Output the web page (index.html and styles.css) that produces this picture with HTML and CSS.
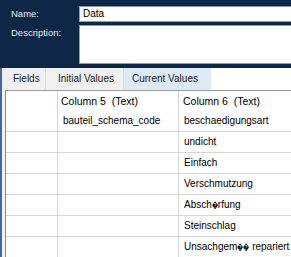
FILE: index.html
```html
<!DOCTYPE html>
<html>
<head>
<meta charset="utf-8">
<link rel="stylesheet" href="styles.css">
</head>
<body>
<div class="top">
  <div class="field">
    <label class="lbl">Name:</label>
    <div class="input name-input">Data</div>
  </div>
  <div class="field">
    <label class="lbl">Description:</label>
    <div class="input desc-input"></div>
  </div>
</div>
<div class="bottom">
  <div class="tabs">
    <div class="tab tab-fields">Fields</div>
    <div class="tab tab-initial">Initial Values</div>
    <div class="tab tab-current">Current Values</div>
    <div class="tab-rest"></div>
  </div>
  <div class="grid">
    <div class="row head">
      <div class="cell c0"></div>
      <div class="cell c1">Column 5&nbsp; (Text)</div>
      <div class="cell c2">Column 6&nbsp; (Text)</div>
    </div>
    <div class="row">
      <div class="cell c0"></div>
      <div class="cell c1">bauteil_schema_code</div>
      <div class="cell c2">beschaedigungsart</div>
    </div>
    <div class="row">
      <div class="cell c0"></div>
      <div class="cell c1"></div>
      <div class="cell c2">undicht</div>
    </div>
    <div class="row">
      <div class="cell c0"></div>
      <div class="cell c1"></div>
      <div class="cell c2">Einfach</div>
    </div>
    <div class="row">
      <div class="cell c0"></div>
      <div class="cell c1"></div>
      <div class="cell c2">Verschmutzung</div>
    </div>
    <div class="row">
      <div class="cell c0"></div>
      <div class="cell c1"></div>
      <div class="cell c2">Absch<span class="repl">&#xFFFD;</span>rfung</div>
    </div>
    <div class="row">
      <div class="cell c0"></div>
      <div class="cell c1"></div>
      <div class="cell c2">Steinschlag</div>
    </div>
    <div class="row">
      <div class="cell c0"></div>
      <div class="cell c1"></div>
      <div class="cell c2">Unsachgem<span class="repl">&#xFFFD;</span><span class="repl">&#xFFFD;</span> repariert</div>
    </div>
  </div>
</div>
</body>
</html>
```

FILE: styles.css
```css
html, body {
  margin: 0;
  padding: 0;
  width: 291px;
  height: 257px;
  overflow: hidden;
  background: #ffffff;
  font-family: "Liberation Sans", Arial, sans-serif;
}

.top {
  background: #0e2747;
  height: 68px;
  box-sizing: border-box;
  padding-top: 6px;
  display: flex;
  flex-direction: column;
  gap: 3px;
}

.field {
  display: flex;
  align-items: flex-start;
}

.lbl {
  width: 68px;
  padding-left: 11px;
  color: #e6ecf3;
  font-size: 9.5px;
  line-height: 15px;
}

.input {
  flex: 1;
  background: #ffffff;
  border: 1px solid #8e98a6;
  border-right: none;
  box-sizing: border-box;
  font-size: 10px;
  color: #000;
  padding-left: 3px;
}

.name-input {
  height: 16px;
  line-height: 14px;
}

.desc-input {
  height: 39px;
}

.bottom {
  border-left: 2px solid #46699a;
  background: #f0f0f0;
  height: 189px;
}

.tabs {
  display: flex;
  height: 22px;
}

.tab {
  font-size: 10px;
  line-height: 22px;
  color: #1a1a1a;
  box-sizing: border-box;
  border-right: 1px solid #dadada;
}

.tab-fields {
  width: 44px;
  padding-left: 11px;
}

.tab-initial {
  width: 78px;
  padding-left: 12px;
}

.tab-current {
  width: 87px;
  padding-left: 8px;
  background: #dce9f6;
  border-right: none;
}

.tab-rest {
  flex: 1;
  background: #ffffff;
}

.grid {
  margin-left: 3px;
  background: #ffffff;
  border-top: 1px solid #9a9a9a;
  border-left: 1px solid #8a8a8a;
  height: 200px;
}

.row {
  display: flex;
  height: 21px;
  box-sizing: border-box;
  border-bottom: 1px solid #d6d6d6;
}

.row.head {
  height: 20px;
  border-bottom: none;
}

.cell {
  box-sizing: border-box;
  font-size: 10px;
  color: #000;
  line-height: 20px;
  white-space: nowrap;
  overflow: hidden;
}

.repl {
  display: inline-block;
  width: 6px;
  font-size: 9px;
  transform: scaleX(0.68);
  transform-origin: left center;
}

.c0 {
  width: 52px;
  border-right: 1px solid #d6d6d6;
}

.c1 {
  width: 121px;
  border-right: 1px solid #d6d6d6;
  padding-left: 5px;
}

.c2 {
  flex: 1;
  padding-left: 5px;
}

.head .c1 {
  padding-left: 3px;
  font-size: 10.5px;
}

.head .c2 {
  padding-left: 4px;
  font-size: 10.5px;
}
```
